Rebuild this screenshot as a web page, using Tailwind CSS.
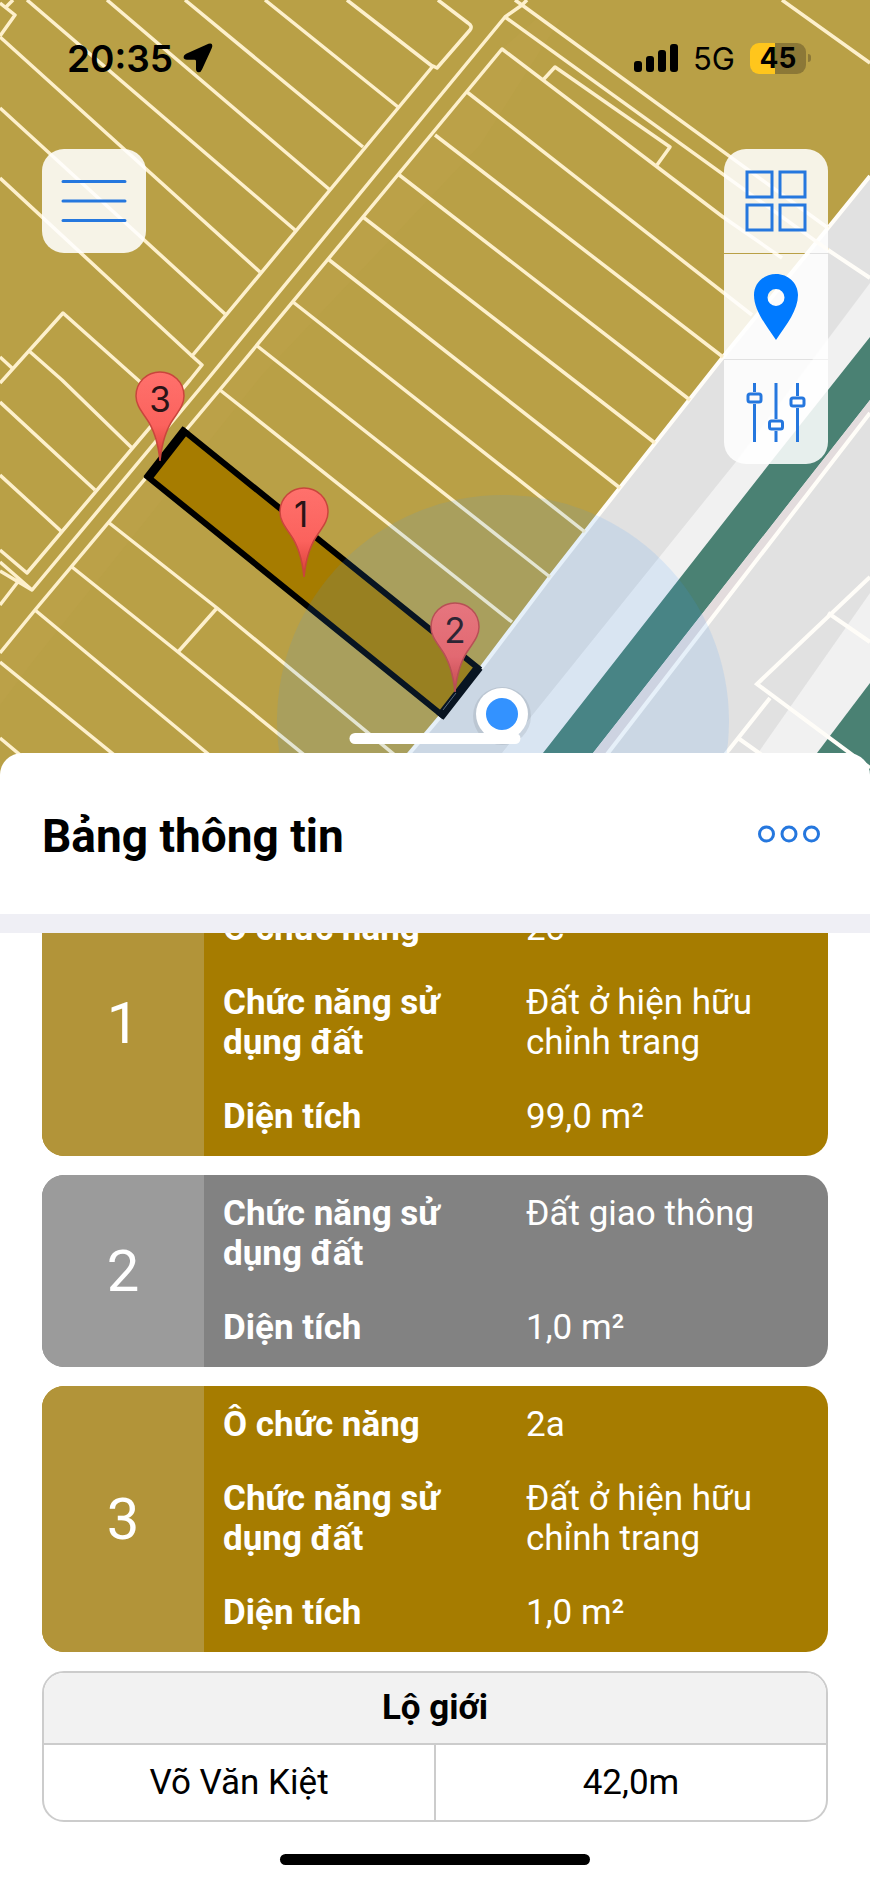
<!DOCTYPE html>
<html lang="vi">
<head>
  <meta charset="UTF-8" />
  <meta name="viewport" content="width=device-width, initial-scale=1.0"/>
  <title>Bảng thông tin</title>
  <script src="https://cdn.jsdelivr.net/npm/@tailwindcss/browser@4"></script>
</head>
<body class="min-h-screen bg-white font-['Roboto',sans-serif] text-black">
  <div class="flex min-h-screen flex-col">

    <!-- Map -->
    <section class="relative h-[780px] overflow-hidden bg-[#b9a046]">
      <svg class="absolute inset-0 h-full w-full" viewBox="0 0 870 780" preserveAspectRatio="xMidYMin slice">
        <defs>
          <linearGradient id="pinFill" x1="0" y1="0" x2="0" y2="1">
            <stop offset="0" stop-color="#ff716c"/>
            <stop offset=".6" stop-color="#fb625d"/>
            <stop offset="1" stop-color="#d93c35"/>
          </linearGradient>
          <path id="pin" d="M0 0C-2-20-6-32-14-43C-21-53-24-58-24-65C-24-79-13-89 0-89C13-89 24-79 24-65C24-58 21-53 14-43C6-32 2-20 0 0Z" fill="url(#pinFill)" stroke="#c9453c" stroke-width="1.5"/>
        </defs>
        <path d="M0 0H870V780H0Z" fill="#b9a046"/>
        <path d="M502 49L535 20L560 20L480 145L262 375L30 665L0 705V653L35 610Z" fill="#bba148"/>
        <!-- road -->
        <path d="M870 176L723 357L600 513L482 667L387 780H870Z" fill="#e1e1e1"/>
        <path d="M870 283L735 463L502 753L480 780H640L870 413Z" fill="#f1f1f1"/>
        <path d="M870 337L770 463L543 753L522 780H572L593 753L870 400Z" fill="#4a8173"/>
        <path d="M870 400L593 753L572 780H587L608 753L870 413Z" fill="#e3dcdd"/>
        <path d="M870 413L608 753L587 780H870Z" fill="#e1e1e1"/>
        <path d="M870 593L758 753L740 780H800L870 683Z" fill="#f1f1f1"/>
        <path d="M870 683L817 753L797 780H870Z" fill="#4a8173"/>
        <g fill="none" stroke="#fffdf8" stroke-width="4">
          <path d="M870 176L828 228L723 357L600 513L550 577L482 667L387 780"/>
          <path d="M870 413L608 753L587 780M870 577L757 684L870 768M828 613L870 642M770 698L705 780M738 738L780 768M828 250L870 278"/>
        </g>
        <!-- parcels -->
        <g fill="none" stroke="#fdf0cc" stroke-width="3.500" stroke-linejoin="round">
          <path d="M0 3L15 15L0 36M13 0L5 8"/>
          <path d="M0 37L260 272M27 0L295 230M107 0L330 190M185 0L363 147M265 0L398 107M347 0L432 66M0 108L225 314M0 178L192 356"/>
          <path d="M438 0L468 23Q473 26 470 30L437 68L433 66L192 356L202 365L190 380L27 573L0 550"/>
          <path d="M515 0L522 5L505 17L435 102L207 380L32 590L0 562M32 590L0 571M522 5L527 0M17 583L0 605"/>
          <path d="M723 217L502 49L435 130L228 380L35 610L0 653M723 217L782 258"/>
          <path d="M543 80L555 67L670 147L657 165"/>
          <path d="M505 17L828 250M522 5L828 228M782 0L870 63M467 92L752 315M435 135L723 357"/>
          <path d="M398 174L690 400M363 217L655 443M328 259L620 488M293 302L585 532M256 345L550 577M220 390L512 622"/>
          <path d="M108 522L217 608L425 780M72 567L178 652L335 780M217 608L178 652M35 610L207 753L240 780M0 662L145 780M0 738L50 780"/>
          <path d="M0 383L63 313L138 380L158 398M0 357L12 368M28 350L62 380L132 448M0 402L95 490M0 475L62 532"/>
        </g>
        <!-- selected parcel -->
        <path d="M184 431L148 477L442 715L478 668Z" fill="#a67c00" stroke="#000" stroke-width="6"/>
        <path d="M186 429L147 479M440 717L479 667" fill="none" stroke="#000" stroke-width="9"/>
        <path d="M443 710L456 693" fill="none" stroke="#5c6570" stroke-width="1"/>
        <g class="font-['Inter',sans-serif]" font-size="35" fill="#2b1416" text-anchor="middle">
          <use href="#pin" x="160" y="461"/>
          <text x="160" y="412">3</text>
          <use href="#pin" x="304" y="577"/>
          <text x="301" y="527">1</text>
          <use href="#pin" x="455" y="692"/>
          <text x="455" y="643">2</text>
        </g>
        <circle cx="503" cy="721" r="226" fill="#3c98ff" fill-opacity=".13"/>
        <circle cx="502" cy="716" r="29" fill="#000" fill-opacity=".08"/>
        <circle cx="502" cy="714" r="26" fill="#fff"/>
        <circle cx="502" cy="714" r="16" fill="#3392ff"/>
      </svg>

      <!-- Status bar -->
      <div class="relative flex h-[116px] items-center justify-between pr-[59px] pl-[67px] font-['Inter',sans-serif]">
        <div class="flex items-center gap-[10px]">
          <span class="text-[37px] leading-none font-semibold">20:35</span>
          <svg class="h-[30px] w-[30px]" viewBox="0 0 30 30"><path d="M25.500.800Q29.500-.500 29.300 3.200Q29 5 27.500 8L19 26.500Q17.800 29.500 15.500 29.300Q13 29 13 26V18.200Q13 16.800 11.600 16.800H4Q.600 16.600.600 14Q.600 12 3.200 10.800Z"/></svg>
        </div>
        <div class="flex items-center gap-[15px]">
          <svg class="h-7 w-[44px]" viewBox="0 0 44 28">
            <rect x="0" y="17" width="8" height="11" rx="3"/>
            <rect x="12" y="12" width="8" height="16" rx="3"/>
            <rect x="24" y="6" width="8" height="22" rx="3"/>
            <rect x="36" y="0" width="8" height="28" rx="3"/>
          </svg>
          <span class="text-[31px] leading-none">5G</span>
          <div class="flex items-center gap-[2px]">
            <span class="flex h-[31px] w-14 items-center justify-center rounded-[9px] bg-linear-to-r from-[#ffc61c] from-45% to-[#8c7837] to-45% text-[28px] leading-none font-bold">45</span>
            <span class="h-2 w-[3px] rounded-r-full bg-[#8c7837]"></span>
          </div>
        </div>
      </div>

      <!-- Map controls -->
      <div class="relative flex items-start justify-between px-[42px] pt-[33px]">
        <button aria-label="Menu" class="flex h-[104px] w-[104px] items-center justify-center rounded-[22px] bg-white/87">
          <svg class="h-[60px] w-[66px]" viewBox="0 0 66 60" fill="none" stroke="#2577de" stroke-width="3" stroke-linecap="round"><path d="M2 10.500H64M2 30H64M2 49.500H64"/></svg>
        </button>
        <div class="flex w-[104px] flex-col gap-px overflow-hidden rounded-[22px]">
          <button aria-label="Lớp bản đồ" class="flex h-[104px] items-center justify-center bg-white/87">
            <svg class="h-[62px] w-[62px]" viewBox="0 0 62 62" fill="none" stroke="#2577de" stroke-width="3">
              <path d="M2 2H27V27H2ZM35 2H60V27H35ZM2 35H27V60H2ZM35 35H60V60H35Z"/>
            </svg>
          </button>
          <button aria-label="Vị trí" class="flex h-[105px] items-center justify-center bg-white/87">
            <svg class="h-[66px] w-[44px]" viewBox="0 0 44 66" fill="#007aff" fill-rule="evenodd"><path d="M22 0C10 0 0 9 0 21C0 36 11 50 22 66C33 50 44 36 44 21C44 9 34 0 22 0ZM22 15A8.500 8.500 0 1 1 22 32A8.500 8.500 0 1 1 22 15Z"/></svg>
          </button>
          <button aria-label="Bộ lọc" class="flex h-[104px] items-center justify-center bg-white/87">
            <svg class="h-[60px] w-[60px]" viewBox="0 0 60 60" fill="none" stroke="#2577de" stroke-width="3">
              <path d="M8.500 1V10M8.500 22V60M30 1V37M30 49V60M51.500 1V14M51.500 26V60"/>
              <rect x="2" y="12" width="13" height="8" rx="2"/>
              <rect x="23.500" y="39" width="13" height="8" rx="2"/>
              <rect x="45" y="16" width="13" height="8" rx="2"/>
            </svg>
          </button>
        </div>
      </div>

      <div class="absolute top-[733px] left-1/2 h-[11px] w-[171px] -translate-x-1/2 rounded-full bg-white"></div>
    </section>

    <!-- Info sheet -->
    <section class="relative -mt-[27px] flex grow flex-col rounded-t-[22px] bg-white">
      <header class="flex h-[161px] items-center justify-between px-[42px]">
        <h1 class="pt-1 text-[46px] leading-[54px] font-bold">Bảng thông tin</h1>
        <button aria-label="Thêm" class="pr-2">
          <svg class="h-[18px] w-[62px]" viewBox="0 0 62 18" fill="none" stroke="#2577de" stroke-width="3"><circle cx="8.500" cy="9" r="7"/><circle cx="31" cy="9" r="7"/><circle cx="53.500" cy="9" r="7"/></svg>
        </button>
      </header>
      <div class="h-[19px] bg-[#efeff5]"></div>

      <!-- list is scrolled, the first card sits partly under the header -->
      <div class="flex flex-col gap-[19px] overflow-hidden px-[42px] text-[35px] leading-[40px]">
        <article class="-mt-[43px] flex overflow-hidden rounded-[22px] bg-[#a67c00] text-white">
          <div class="flex w-[162px] shrink-0 items-center justify-center bg-[#b29439] text-[58px]">1</div>
          <dl class="grid grow grid-cols-2 gap-x-5 gap-y-[34px] px-[19px] py-[19px]">
            <dt class="font-bold">Ô chức năng</dt><dd>2c</dd>
            <dt class="font-bold">Chức năng sử dụng đất</dt><dd>Đất ở hiện hữu chỉnh trang</dd>
            <dt class="font-bold">Diện tích</dt><dd>99,0 m²</dd>
          </dl>
        </article>

        <article class="flex overflow-hidden rounded-[22px] bg-[#828282] text-white">
          <div class="flex w-[162px] shrink-0 items-center justify-center bg-[#9b9b9b] text-[58px]">2</div>
          <dl class="grid grow grid-cols-2 gap-x-5 gap-y-[34px] px-[19px] py-[19px]">
            <dt class="font-bold">Chức năng sử dụng đất</dt><dd>Đất giao thông</dd>
            <dt class="font-bold">Diện tích</dt><dd>1,0 m²</dd>
          </dl>
        </article>

        <article class="flex overflow-hidden rounded-[22px] bg-[#a67c00] text-white">
          <div class="flex w-[162px] shrink-0 items-center justify-center bg-[#b29439] text-[58px]">3</div>
          <dl class="grid grow grid-cols-2 gap-x-5 gap-y-[34px] px-[19px] py-[19px]">
            <dt class="font-bold">Ô chức năng</dt><dd>2a</dd>
            <dt class="font-bold">Chức năng sử dụng đất</dt><dd>Đất ở hiện hữu chỉnh trang</dd>
            <dt class="font-bold">Diện tích</dt><dd>1,0 m²</dd>
          </dl>
        </article>

        <div class="overflow-hidden rounded-[22px] border-2 border-[#cccccc]">
          <table class="w-full table-fixed text-center">
            <thead>
              <tr><th colspan="2" class="h-[71px] border-b-2 border-[#cccccc] bg-[#f2f2f2] font-bold">Lộ giới</th></tr>
            </thead>
            <tbody>
              <tr>
                <td class="h-[76px] border-r-2 border-[#cccccc]">Võ Văn Kiệt</td>
                <td>42,0m</td>
              </tr>
            </tbody>
          </table>
        </div>
      </div>

      <div class="mx-auto mt-auto mb-[18px] h-[11px] w-[310px] rounded-full bg-black"></div>
    </section>
  </div>
</body>
</html>
